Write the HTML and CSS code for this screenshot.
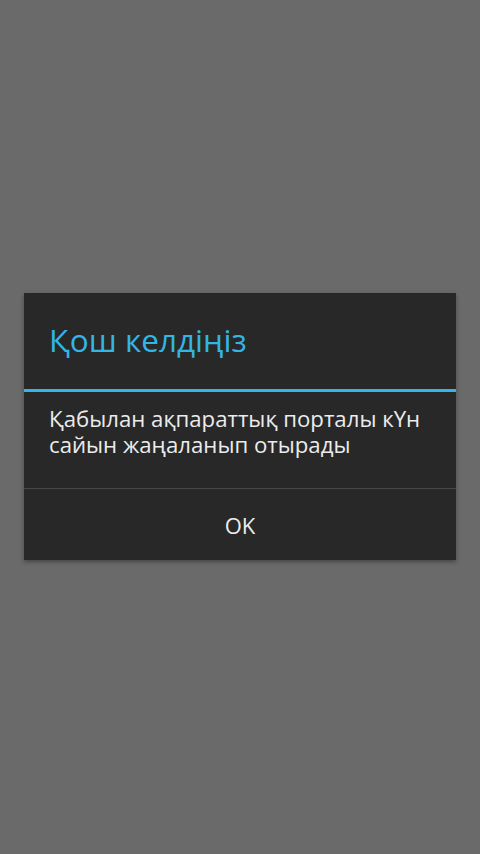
FILE: index.html
```html
<!DOCTYPE html>
<html lang="kk">
<head>
<meta charset="utf-8">
<link rel="stylesheet" href="styles.css">
</head>
<body>
<div class="screen">
  <div class="dialog">
    <div class="title-bar">
      <h1 class="title">Қош келдіңіз</h1>
    </div>
    <div class="accent"></div>
    <div class="message">Қабылан ақпараттық порталы кҮн сайын жаңаланып отырады</div>
    <div class="divider"></div>
    <div class="actions">
      <button class="btn">OK</button>
    </div>
  </div>
</div>
</body>
</html>
```
FILE: styles.css
```css
html, body {
  margin: 0;
  padding: 0;
}
body {
  background: #6a6a6a;
  font-family: "Open Sans", "Noto Sans", sans-serif;
}
.screen {
  width: 480px;
  height: 854px;
  display: flex;
  flex-direction: column;
  align-items: center;
  padding-top: 293px;
  box-sizing: border-box;
}
.dialog {
  width: 432px;
  background: #282828;
  box-shadow: 0 2px 4px rgba(0,0,0,0.35);
  display: flex;
  flex-direction: column;
}
.title-bar {
  height: 96px;
  display: flex;
  align-items: center;
  padding: 0 25px;
}
.title {
  margin: 0;
  font-weight: 400;
  font-size: 31.5px;
  color: #33b5e5;
  line-height: 1;
  padding-bottom: 2px;
}
.accent {
  height: 3px;
  background: #33b5e5;
}
.message {
  height: 96px;
  box-sizing: border-box;
  padding: 14px 25px 0;
  color: #ececec;
  font-size: 22.2px;
  line-height: 26px;
}
.divider {
  height: 1px;
  background: #474747;
}
.actions {
  height: 71px;
  display: flex;
  align-items: center;
  justify-content: center;
}
.btn {
  background: none;
  border: none;
  color: #ececec;
  font-family: inherit;
  font-size: 22px;
  padding: 0;
  margin-top: 0;
}
```
